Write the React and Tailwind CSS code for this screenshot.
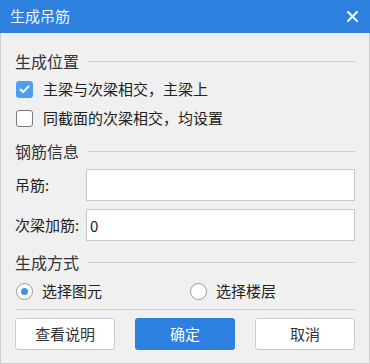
import { useState } from 'react';

const font = { fontFamily: '"Noto Sans CJK SC", "Noto Sans", sans-serif' };

function SectionTitle({ children }) {
    return (
        <div className="flex items-center h-[22px]">
            <span className="text-[16px] leading-[22px] text-[#333]">{children}</span>
            <div className="flex-1 h-px bg-[#c9d0da] ml-[9px]" />
        </div>
    );
}

function Check({ checked, label, onClick }) {
    return (
        <div className="flex items-center h-[22px] cursor-pointer" onClick={onClick}>
            {checked ? (
                <div className="w-[17px] h-[17px] ml-[1px] rounded-[3px] bg-[#4b9ff5] flex items-center justify-center">
                    <svg width="11" height="9" viewBox="0 0 11 9">
                        <path d="M1.5 4.5 L4.2 7 L9.5 1.5" fill="none" stroke="white" strokeWidth="2" strokeLinecap="round" strokeLinejoin="round" />
                    </svg>
                </div>
            ) : (
                <div className="w-[17px] h-[17px] ml-[1px] rounded-[3px] bg-white border border-[#7a7a7a]" />
            )}
            <span className="ml-[10px] text-[15px] leading-[22px] text-[#222]">{label}</span>
        </div>
    );
}

function Radio({ checked, label, onClick }) {
    return (
        <div className="flex items-center h-[22px] cursor-pointer" onClick={onClick}>
            <div className="w-[17px] h-[17px] ml-[1px] rounded-full bg-white border border-[#9a9a9a] flex items-center justify-center">
                {checked && <div className="w-[7px] h-[7px] rounded-full bg-[#3f91f0]" />}
            </div>
            <span className="ml-[9px] text-[15px] leading-[22px] text-[#222]">{label}</span>
        </div>
    );
}

export default function App() {
    const [mainBeam, setMainBeam] = useState(true);
    const [sameSection, setSameSection] = useState(false);
    const [hanger, setHanger] = useState('');
    const [extra, setExtra] = useState('0');
    const [mode, setMode] = useState('element');

    return (
        <div className="w-[370px] h-[364px] bg-[#f0f0f0] flex flex-col" style={font}>
            {/* title bar */}
            <div className="h-[33px] bg-[#2e80de] flex items-center justify-between pl-[10px] pr-[12px]">
                <span className="text-[15px] text-[#eef4fc]">生成吊筋</span>
                <svg width="11" height="11" viewBox="0 0 11 11">
                    <path d="M1 1 L10 10 M10 1 L1 10" stroke="white" strokeWidth="2" strokeLinecap="round" />
                </svg>
            </div>

            <div className="flex-1 flex flex-col border-x border-b border-[#cdcdcd] pl-[14px] pr-[14px]">
                <div className="mt-[17px]">
                    <SectionTitle>生成位置</SectionTitle>
                </div>
                <div className="mt-[6px] flex flex-col gap-[7px]">
                    <Check checked={mainBeam} label="主梁与次梁相交，主梁上" onClick={() => setMainBeam(!mainBeam)} />
                    <Check checked={sameSection} label="同截面的次梁相交，均设置" onClick={() => setSameSection(!sameSection)} />
                </div>

                <div className="mt-[11px]">
                    <SectionTitle>钢筋信息</SectionTitle>
                </div>
                <div className="mt-[7px] flex flex-col gap-[8px]">
                    <div className="flex items-center">
                        <label className="w-[71px] text-[15px] text-[#222]">吊筋:</label>
                        <input value={hanger} onChange={e => setHanger(e.target.value)} className="flex-1 h-[32px] bg-white border border-[#c8c8c8] px-[3px] text-[15px] outline-none" />
                    </div>
                    <div className="flex items-center">
                        <label className="w-[71px] text-[15px] text-[#222]">次梁加筋:</label>
                        <input value={extra} onChange={e => setExtra(e.target.value)} className="flex-1 h-[32px] bg-white border border-[#c8c8c8] px-[3px] text-[15px] text-[#222] outline-none" />
                    </div>
                </div>

                <div className="mt-[10px]">
                    <SectionTitle>生成方式</SectionTitle>
                </div>
                <div className="mt-[7px] flex items-center">
                    <div className="w-[174px]">
                        <Radio checked={mode === 'element'} label="选择图元" onClick={() => setMode('element')} />
                    </div>
                    <Radio checked={mode === 'floor'} label="选择楼层" onClick={() => setMode('floor')} />
                </div>

                <div className="mt-[7px] h-px bg-[#c9d0da]" />

                <div className="mt-[8px] flex gap-[20px]">
                    <button className="w-[100px] h-[32px] rounded-[3px] bg-white border border-[#c5ccd8] text-[15px] text-[#333]">查看说明</button>
                    <button className="w-[100px] h-[32px] rounded-[3px] bg-[#2e80e0] text-[15px] text-white">确定</button>
                    <button className="w-[100px] h-[32px] rounded-[3px] bg-white border border-[#c5ccd8] text-[15px] text-[#333]">取消</button>
                </div>
            </div>
        </div>
    );
}
